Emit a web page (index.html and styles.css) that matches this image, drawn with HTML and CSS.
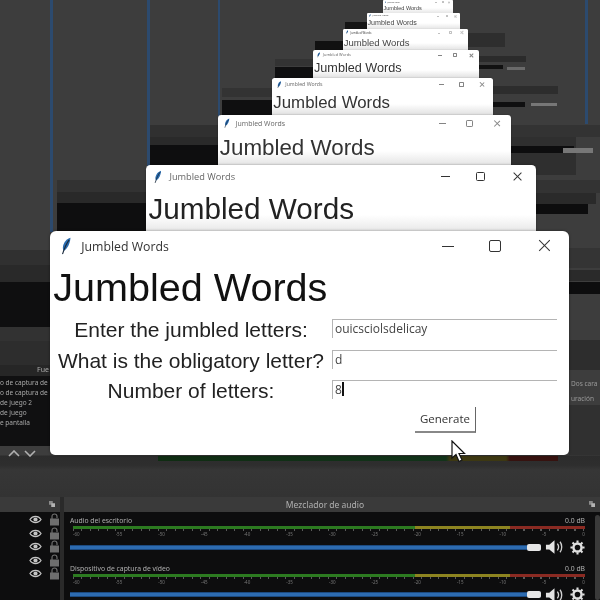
FILE: index.html
```html
<!DOCTYPE html>
<html lang="en">
<head>
    <meta charset="UTF-8">
    <title>Jumbled Words</title>
    <link rel="stylesheet" href="styles.css">
</head>
<body>
    <svg class="defs" width="0" height="0">
        <symbol id="feather" viewBox="0 0 10 16">
            <path d="M8.6 .6C5 1.6 2.6 4.6 1.8 8.4 1.5 10 1.8 11.600 2.600 12.400 5.800 10.800 8.400 5.600 8.600 .6Z" fill="#2a6cb0"/>
            <path d="M7.400 2.400C5.200 5.400 3.200 9.400 1.400 15.400" fill="none" stroke="#1a2a3c" stroke-width="1"/>
        </symbol>
        <symbol id="eye" viewBox="0 0 14 10">
            <path d="M.8 5C3.800 .4 10.200 .4 13.200 5 10.200 9.600 3.800 9.600 .8 5Z" fill="none" stroke="#c4c4c4" stroke-width="1.300"/>
            <circle cx="7" cy="5" r="2.300" fill="#c4c4c4"/>
        </symbol>
        <symbol id="lock" viewBox="0 0 10 13">
            <path d="M2.500 6V3.400C2.500 1.800 3.600 1 5 1S7.500 1.800 7.500 3.400V5" fill="none" stroke="#6e6e6e" stroke-width="1.200"/>
            <rect x=".5" y="5.500" width="9" height="7" fill="#6e6e6e"/>
        </symbol>
        <symbol id="speaker" viewBox="0 0 20 16">
            <path d="M1 5.500H4.500L10 1V15L4.500 10.500H1Z" fill="#e4e4e4"/>
            <path d="M13 4.500C14.500 6.500 14.500 9.500 13 11.500M15.800 2.500C18.200 5.500 18.200 10.500 15.800 13.500" fill="none" stroke="#d0d0d0" stroke-width="1.400"/>
        </symbol>
        <symbol id="gear" viewBox="0 0 16 16">
            <circle cx="8" cy="8" r="4.300" fill="none" stroke="#e0e0e0" stroke-width="2.600"/>
            <path d="M8 .5V3M8 13V15.500M.5 8H3M13 8H15.500M2.700 2.700 4.500 4.500M11.500 11.500 13.300 13.300M2.700 13.300 4.500 11.500M11.500 4.500 13.300 2.700" stroke="#e0e0e0" stroke-width="2.200"/>
        </symbol>
        <symbol id="float" viewBox="0 0 8 8">
            <rect x="0" y="0" width="5" height="5" fill="#8a8a8a"/>
            <rect x="3" y="3" width="5" height="5" fill="#b4b4b4"/>
        </symbol>
    </svg>

    <div class="screen">
        <div class="stage">
            <!-- blue guide lines of the preview behind the windows -->
            <i class="guide g1"></i>
            <i class="guide g2"></i>
            <i class="guide g3"></i>
            <i class="guide g4"></i>

            <!-- OBS panels showing through, one set per trailing window -->
            <i class="band b-l1a"></i><i class="band b-l1b"></i><i class="band b-l1c"></i>
            <i class="band b-l1d"></i><i class="band b-l1e"></i><i class="band b-l1f"></i><i class="band b-l1g"></i>
            <i class="band b-l2a"></i><i class="band b-l2b"></i><i class="band b-l2c"></i>
            <i class="band b-l3a"></i><i class="band b-l3b"></i><i class="band b-l3c"></i>
            <i class="band b-l4a"></i><i class="band b-l4c"></i>
            <i class="band b-l5a"></i><i class="band b-l5c"></i>
            <i class="band b-l6c"></i>
            <i class="band b-l7c"></i>
            <i class="band b-r1a"></i><i class="band b-r1b"></i><i class="band b-r1c"></i><i class="band b-r1d"></i><i class="band b-r1e"></i>
            <i class="band b-r2a"></i><i class="band b-r2b"></i><i class="band b-r2c"></i>
            <i class="band b-r3a"></i><i class="band b-r3b"></i><i class="band b-r3c"></i><i class="band b-r3d"></i>
            <i class="band b-r4a"></i><i class="band b-r4c"></i><i class="band b-r4d"></i>
            <i class="band b-r5a"></i><i class="band b-r5c"></i><i class="band b-r5d"></i>
            <i class="band b-r6a"></i>

            <div class="sources-label">Fue</div>
            <ul class="sources-list">
                <li>o de captura de</li>
                <li>o de captura de</li>
                <li>de juego 2</li>
                <li>de juego</li>
                <li>e pantalla</li>
            </ul>
            <div class="chevrons">
                <svg width="12" height="7" viewBox="0 0 12 7"><path d="M1 6 6 1 11 6" fill="none" stroke="#b0b0b0" stroke-width="1.600"/></svg>
                <svg width="12" height="7" viewBox="0 0 12 7"><path d="M1 1 6 6 11 1" fill="none" stroke="#b0b0b0" stroke-width="1.600"/></svg>
            </div>
            <div class="side-note note-a">Dos cara</div>
            <div class="side-note note-b">uración</div>
            <i class="meter-strip"></i>

            <div class="win w8"><div class="win-title"><svg class="feather"><use href="#feather"/></svg><span class="win-name">Jumbled Words</span><span class="caption"><b class="cap-min"></b><b class="cap-max"></b><b class="cap-x"></b></span></div><div class="win-head">Jumbled Words</div></div>
            <div class="win w7"><div class="win-title"><svg class="feather"><use href="#feather"/></svg><span class="win-name">Jumbled Words</span><span class="caption"><b class="cap-min"></b><b class="cap-max"></b><b class="cap-x"></b></span></div><div class="win-head">Jumbled Words</div></div>
            <div class="win w6"><div class="win-title"><svg class="feather"><use href="#feather"/></svg><span class="win-name">Jumbled Words</span><span class="caption"><b class="cap-min"></b><b class="cap-max"></b><b class="cap-x"></b></span></div><div class="win-head">Jumbled Words</div></div>
            <div class="win w5"><div class="win-title"><svg class="feather"><use href="#feather"/></svg><span class="win-name">Jumbled Words</span><span class="caption"><b class="cap-min"></b><b class="cap-max"></b><b class="cap-x"></b></span></div><div class="win-head">Jumbled Words</div></div>
            <div class="win w4"><div class="win-title"><svg class="feather"><use href="#feather"/></svg><span class="win-name">Jumbled Words</span><span class="caption"><b class="cap-min"></b><b class="cap-max"></b><b class="cap-x"></b></span></div><div class="win-head">Jumbled Words</div></div>
            <div class="win w3"><div class="win-title"><svg class="feather"><use href="#feather"/></svg><span class="win-name">Jumbled Words</span><span class="caption"><b class="cap-min"></b><b class="cap-max"></b><b class="cap-x"></b></span></div><div class="win-head">Jumbled Words</div></div>
            <div class="win w2"><div class="win-title"><svg class="feather"><use href="#feather"/></svg><span class="win-name">Jumbled Words</span><span class="caption"><b class="cap-min"></b><b class="cap-max"></b><b class="cap-x"></b></span></div><div class="win-head">Jumbled Words</div></div>

            <div class="win w1">
                <div class="win-title">
                    <svg class="feather"><use href="#feather"/></svg>
                    <span class="win-name">Jumbled Words</span>
                    <span class="caption"><b class="cap-min"></b><b class="cap-max"></b><b class="cap-x"></b></span>
                </div>
                <div class="win-head">Jumbled Words</div>
                <div class="form">
                    <label>Enter the jumbled letters:</label>
                    <div class="entry">ouicsciolsdelicay</div>
                    <label>What is the obligatory letter?</label>
                    <div class="entry">d</div>
                    <label>Number of letters:</label>
                    <div class="entry">8<span class="caret"></span></div>
                </div>
                <div class="actions"><button>Generate</button></div>
            </div>

            <svg class="pointer" width="16" height="24" viewBox="0 0 16 24">
                <path d="M1 1V18L5 14.500 8 21.500 11 20 8 13.500H13.500Z" fill="#fff" stroke="#111" stroke-width="1.200"/>
            </svg>
        </div>

        <div class="docks">
            <div class="dock dock-left">
                <div class="dock-head"><svg class="float"><use href="#float"/></svg></div>
                <div class="scene-rows">
                    <div class="scene-row"><svg class="eye"><use href="#eye"/></svg><svg class="lock"><use href="#lock"/></svg></div>
                    <div class="scene-row"><svg class="eye"><use href="#eye"/></svg><svg class="lock"><use href="#lock"/></svg></div>
                    <div class="scene-row"><svg class="eye"><use href="#eye"/></svg><svg class="lock"><use href="#lock"/></svg></div>
                    <div class="scene-row"><svg class="eye"><use href="#eye"/></svg><svg class="lock"><use href="#lock"/></svg></div>
                    <div class="scene-row"><svg class="eye"><use href="#eye"/></svg><svg class="lock"><use href="#lock"/></svg></div>
                </div>
            </div>
            <div class="dock dock-right">
                <div class="dock-head"><span>Mezclador de audio</span><svg class="float"><use href="#float"/></svg></div>
                <div class="channels">
                    <div class="channel">
                        <div class="ch-top"><span>Audio del escritorio</span><span>0.0 dB</span></div>
                        <div class="meter"><i class="m-green"></i><i class="m-yellow"></i><i class="m-red"></i></div>
                        <div class="scale"><span>-60</span><span>-55</span><span>-50</span><span>-45</span><span>-40</span><span>-35</span><span>-30</span><span>-25</span><span>-20</span><span>-15</span><span>-10</span><span>-5</span><span>0</span></div>
                        <div class="ch-ctrl"><div class="slider"><i class="knob"></i></div><svg class="speaker"><use href="#speaker"/></svg><svg class="gear"><use href="#gear"/></svg></div>
                    </div>
                    <div class="channel">
                        <div class="ch-top"><span>Dispositivo de captura de vídeo</span><span>0.0 dB</span></div>
                        <div class="meter"><i class="m-green"></i><i class="m-yellow"></i><i class="m-red"></i></div>
                        <div class="scale"><span>-60</span><span>-55</span><span>-50</span><span>-45</span><span>-40</span><span>-35</span><span>-30</span><span>-25</span><span>-20</span><span>-15</span><span>-10</span><span>-5</span><span>0</span></div>
                        <div class="ch-ctrl"><div class="slider"><i class="knob"></i></div><svg class="speaker"><use href="#speaker"/></svg><svg class="gear"><use href="#gear"/></svg></div>
                    </div>
                </div>
                <i class="scrollbar"></i>
            </div>
        </div>
    </div>
</body>
</html>
```

FILE: styles.css
```css
html, body {
    margin: 0;
    padding: 0;
    background-color: #333;
}
.defs {
    position: absolute;
}
.screen {
    width: 600px;
    height: 600px;
    overflow: hidden;
    display: flex;
    flex-direction: column;
    font-family: 'Noto Sans', sans-serif;
    filter: blur(0.45px);
}
.stage {
    position: relative;
    height: 497px;
    flex: none;
    overflow: hidden;
    background: linear-gradient(#3d3d3d 0, #3d3d3d 455px, #2c2c2c 456px, #2e2e2e 465px, #363636 470px, #333 497px);
}

/* preview guide lines */
.guide {
    position: absolute;
    width: 3px;
    top: 0;
    background-color: #2c4a6e;
}
.g1 { left: 50px; height: 232px; }
.g2 { left: 147px; height: 166px; }
.g3 { left: 585px; height: 124px; }
.g4 { left: 218px; height: 116px; width: 2px; }

/* panels behind the windows */
.band {
    position: absolute;
}
.b-l1a { left: 0; top: 250px; width: 50px; height: 15px; background-color: #303030; }
.b-l1b { left: 0; top: 265px; width: 50px; height: 17px; background-color: #292929; }
.b-l1c { left: 0; top: 282px; width: 50px; height: 45px; background-color: #0f0f10; }
.b-l1d { left: 0; top: 327px; width: 50px; height: 14px; background-color: #323232; }
.b-l1e { left: 0; top: 341px; width: 50px; height: 24px; background-color: #2d2d2d; }
.b-l1f { left: 0; top: 365px; width: 50px; height: 11px; background-color: #262626; }
.b-l1g { left: 0; top: 376px; width: 50px; height: 70px; background-color: #101011; }
.b-l2a { left: 57px; top: 180px; width: 89px; height: 12px; background-color: #323232; }
.b-l2b { left: 57px; top: 192px; width: 89px; height: 11px; background-color: #292929; }
.b-l2c { left: 57px; top: 203px; width: 89px; height: 28px; background-color: #0e0e0f; }
.b-l3a { left: 150px; top: 125px; width: 68px; height: 12px; background-color: #303030; }
.b-l3b { left: 150px; top: 137px; width: 68px; height: 8px; background-color: #2a2a2a; }
.b-l3c { left: 150px; top: 145px; width: 68px; height: 20px; background-color: #0e0e0f; }
.b-l4a { left: 222px; top: 88px; width: 50px; height: 9px; background-color: #333; }
.b-l4c { left: 222px; top: 100px; width: 50px; height: 15px; background-color: #0f0f10; }
.b-l5a { left: 275px; top: 59px; width: 38px; height: 7px; background-color: #333; }
.b-l5c { left: 275px; top: 67px; width: 38px; height: 11px; background-color: #0f0f10; }
.b-l6c { left: 315px; top: 41px; width: 28px; height: 9px; background-color: #111; }
.b-l7c { left: 345px; top: 22px; width: 22px; height: 7px; background-color: #151515; }

.b-r1a { left: 569px; top: 248px; width: 31px; height: 20px; background-color: #343434; }
.b-r1b { left: 569px; top: 270px; width: 31px; height: 11px; background-color: #2a2a2a; }
.b-r1c { left: 569px; top: 282px; width: 31px; height: 12px; background-color: #0d0d0e; }
.b-r1d { left: 569px; top: 340px; width: 31px; height: 30px; background-color: #2d2d2d; }
.b-r1e { left: 569px; top: 405px; width: 31px; height: 50px; background-color: #303030; }
.b-r2a { left: 536px; top: 180px; width: 64px; height: 13px; background-color: #333; }
.b-r2b { left: 536px; top: 193px; width: 60px; height: 11px; background-color: #2a2a2a; }
.b-r2c { left: 536px; top: 204px; width: 52px; height: 10px; background-color: #0d0d0e; }
.b-r3a { left: 511px; top: 125px; width: 89px; height: 12px; background-color: #333; }
.b-r3b { left: 511px; top: 137px; width: 65px; height: 38px; background-color: #2f2f2f; }
.b-r3c { left: 511px; top: 146px; width: 63px; height: 7px; background-color: #0d0d0e; }
.b-r3d { left: 563px; top: 148px; width: 30px; height: 5px; background-color: #777; }
.b-r4a { left: 493px; top: 86px; width: 65px; height: 8px; background-color: #2d2d2d; }
.b-r4c { left: 493px; top: 102px; width: 32px; height: 5px; background-color: #0f0f10; }
.b-r4d { left: 531px; top: 103px; width: 26px; height: 3px; background-color: #777; }
.b-r5a { left: 479px; top: 56px; width: 47px; height: 6px; background-color: #2b2b2b; }
.b-r5c { left: 479px; top: 65px; width: 24px; height: 4px; background-color: #111; }
.b-r5d { left: 507px; top: 67px; width: 18px; height: 3px; background-color: #6a6a6a; }
.b-r6a { left: 468px; top: 33px; width: 37px; height: 14px; background-color: #2e2e2e; }

.sources-label {
    position: absolute;
    left: 37px;
    top: 365px;
    font-size: 7px;
    color: #aaa;
}
.sources-list {
    position: absolute;
    left: 0;
    top: 378px;
    width: 50px;
    margin: 0;
    padding: 0;
    list-style: none;
    white-space: nowrap;
    font-size: 6.5px;
    line-height: 10px;
    color: #a8a8a8;
}
.chevrons {
    position: absolute;
    left: 8px;
    top: 450px;
    display: flex;
    gap: 4px;
}
.side-note {
    position: absolute;
    left: 571px;
    font-size: 6.5px;
    color: #9a9a9a;
    white-space: nowrap;
}
.note-a { top: 379px; }
.note-b { top: 394px; }
.meter-strip {
    position: absolute;
    left: 158px;
    top: 456px;
    width: 400px;
    height: 5px;
    background: linear-gradient(90deg, #0f2c12 0, #12331a 72%, #3d3812 73%, #3d3812 87%, #36120f 88%);
}

/* tk window, every length is in em so the trailing copies can shrink */
.win {
    position: absolute;
    box-sizing: border-box;
    background-color: #fff;
    border-radius: 0.6em 0.6em 0.5em 0.5em;
    box-shadow: 0 0 0.3em rgba(0, 0, 0, 0.4);
    overflow: hidden;
}
.w1 { left: 50px; top: 231px; width: 519px; height: 224px; font-size: 10px; }
.w2 { left: 146px; top: 165px; width: 390px; height: 168px; font-size: 7.500px; background: linear-gradient(#fff 50px, #e8e8e8 66px); }
.w3 { left: 218px; top: 115px; width: 293px; height: 60px; font-size: 5.650px; background: linear-gradient(#fff 36px, #e4e4e4 50px); }
.w4 { left: 272px; top: 78px; width: 221px; height: 50px; font-size: 4.250px; background: linear-gradient(#fff 26px, #e0e0e0 37px); }
.w5 { left: 313px; top: 50px; width: 166px; height: 40px; font-size: 3.200px; background: linear-gradient(#fff 20px, #e0e0e0 28px); }
.w6 { left: 343px; top: 29px; width: 125px; height: 30px; font-size: 2.400px; background: linear-gradient(#fff 14px, #e2e2e2 21px); }
.w7 { left: 367px; top: 13px; width: 93px; height: 25px; font-size: 1.800px; background: linear-gradient(#fff 10px, #e4e4e4 16px); }
.w8 { left: 383px; top: 0; width: 70px; height: 20px; font-size: 1.400px; background: linear-gradient(#fff 8px, #e6e6e6 13px); }
.w3 .win-head, .w4 .win-head, .w5 .win-head { color: #333; }
.w6 .win-head, .w7 .win-head, .w8 .win-head { color: #444; }
.w2 .win-head { color: #222; }
.w2 .win-name, .w3 .win-name, .w4 .win-name, .w5 .win-name { color: #666; }
.w3 .caption, .w4 .caption, .w5 .caption { opacity: 0.6; }
.w6 .caption, .w7 .caption, .w8 .caption { opacity: 0.3; }
.win-title {
    display: flex;
    align-items: center;
    height: 3em;
    padding: 0 1.9em 0 1.1em;
}
.feather {
    width: 1.1em;
    height: 1.800em;
    flex: none;
}
.win-name {
    margin-left: 0.75em;
    font-size: 1.230em;
    color: #333;
    font-family: 'Open Sans', sans-serif;
}
.caption {
    margin-left: auto;
    display: flex;
    align-items: center;
}
.caption b {
    position: relative;
    display: block;
    width: 1.2em;
    height: 1.2em;
}
.cap-min {
    margin-right: 3.500em;
}
.cap-min::before {
    content: "";
    position: absolute;
    left: 0;
    right: 0;
    top: 50%;
    border-top: 0.15em solid #333;
}
.cap-max {
    margin-right: 3.700em;
    box-sizing: border-box;
    border: 0.15em solid #333;
    border-radius: 0.2em;
}
.cap-x::before,
.cap-x::after {
    content: "";
    position: absolute;
    left: -0.15em;
    right: -0.15em;
    top: 0.52em;
    border-top: 0.13em solid #333;
    transform: rotate(45deg);
}
.cap-x::after {
    transform: rotate(-45deg);
}
.win-head {
    margin: 0.14em 0 0 0.08em;
    font-family: 'Liberation Sans', Arial, sans-serif;
    font-size: 3.960em;
    line-height: 1.15em;
    color: #111;
    white-space: nowrap;
}
.w1 .win-head {
    margin-top: 0.09em;
}
.form {
    display: grid;
    grid-template-columns: 278px 227px;
    grid-auto-rows: 30.500px;
    margin: 5px 0 0 2px;
    align-items: center;
}
.form label {
    text-align: center;
    font-family: 'Liberation Sans', Arial, sans-serif;
    font-size: 21px;
    color: #222;
    white-space: nowrap;
}
.entry {
    box-sizing: border-box;
    height: 22px;
    padding: 1px 0 3px 2px;
    border-top: 1px solid #b4b4b4;
    border-left: 1px solid #b4b4b4;
    border-image: linear-gradient(#b4b4b4 0, #b4b4b4 18px, #fff 18px) 1;
    font-family: 'Open Sans', sans-serif;
    font-size: 12px;
    line-height: 15px;
    color: #444;
    margin-left: 2px;
    display: flex;
}
.caret {
    width: 2px;
    height: 14px;
    background-color: #111;
}
.actions {
    padding-left: 365px;
    margin-top: 0;
}
.actions button {
    box-sizing: border-box;
    width: 61px;
    height: 26px;
    padding: 0;
    background-color: #fff;
    border: 0;
    border-right: 1px solid #666;
    border-bottom: 2px solid #888;
    font-family: 'Open Sans', sans-serif;
    font-size: 11.500px;
    color: #333;
}
.pointer {
    position: absolute;
    left: 451px;
    top: 440px;
}

/* bottom docks */
.docks {
    flex: 1;
    display: flex;
    gap: 4px;
    background-color: #2a2a2a;
}
.dock {
    position: relative;
    display: flex;
    flex-direction: column;
    background-color: #0d0d0e;
}
.dock-left { width: 60px; }
.dock-right { flex: 1; }
.dock-head {
    position: relative;
    height: 15px;
    flex: none;
    background-color: #3a3a3a;
    padding-right: 14px;
    text-align: center;
    font-size: 8.500px;
    line-height: 15px;
    color: #b0b0b0;
}
.float {
    position: absolute;
    right: 5px;
    top: 4px;
    width: 6px;
    height: 6px;
}
.scene-rows {
    padding-top: 1px;
}
.scene-row {
    display: flex;
    align-items: center;
    justify-content: flex-end;
    gap: 7px;
    height: 13.500px;
}
.eye {
    width: 13px;
    height: 9px;
}
.lock {
    width: 11px;
    height: 13px;
}
.channels {
    padding: 4px 15px 0 6px;
}
.channel {
    height: 47.500px;
}
.ch-top {
    display: flex;
    justify-content: space-between;
    font-size: 6.800px;
    line-height: 10px;
    color: #b0b0b0;
}
.meter {
    display: flex;
    height: 3px;
    margin: 0 0 0 3px;
}
.meter i { display: block; }
.m-green { width: 342px; background-color: #2c7a20; }
.m-yellow { width: 95px; background-color: #8d8420; }
.m-red { flex: 1; background-color: #8a2a22; }
.scale {
    display: flex;
    justify-content: space-between;
    margin: 0 0 0 3px;
    height: 8px;
    background: repeating-linear-gradient(90deg, #5a5a5a 0, #5a5a5a 1px, transparent 1px, transparent 8.500px) 0 0 / 100% 2px no-repeat;
    padding-top: 1px;
    box-sizing: border-box;
    font-size: 4.500px;
    line-height: 8px;
    color: #777;
}
.ch-ctrl {
    display: flex;
    align-items: center;
    margin-top: 2px;
    height: 16px;
}
.slider {
    position: relative;
    width: 471px;
    height: 5px;
    background-color: #2d6bb0;
    border-top: 1px solid #1c4a80;
    border-bottom: 1px solid #1c4a80;
    box-sizing: border-box;
}
.knob {
    position: absolute;
    right: 0;
    top: -2px;
    width: 14px;
    height: 7px;
    border-radius: 2px;
    background-color: #e6e6e6;
}
.speaker {
    width: 19px;
    height: 16px;
    margin-left: 4px;
}
.gear {
    width: 15px;
    height: 15px;
    margin-left: 6px;
}
.scrollbar {
    position: absolute;
    right: 0;
    top: 18px;
    width: 5px;
    height: 85px;
    background-color: #3a3a3a;
    border-radius: 3px;
}
```
